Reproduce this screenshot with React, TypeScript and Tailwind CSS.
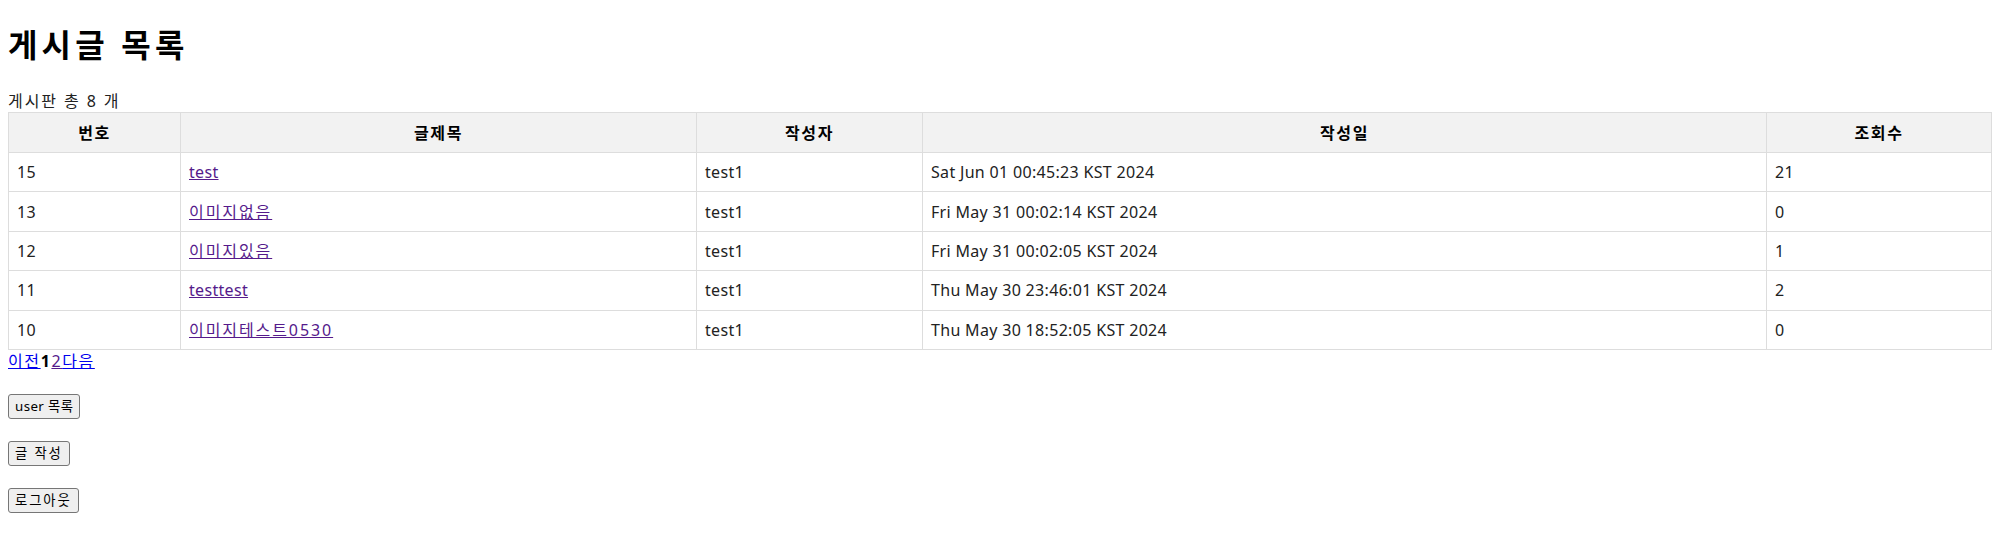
import React from "react";

interface Post {
  id: number;
  title: string;
  writer: string;
  date: string;
  views: number;
}

const posts: Post[] = [
  { id: 15, title: "test", writer: "test1", date: "Sat Jun 01 00:45:23 KST 2024", views: 21 },
  { id: 13, title: "이미지없음", writer: "test1", date: "Fri May 31 00:02:14 KST 2024", views: 0 },
  { id: 12, title: "이미지있음", writer: "test1", date: "Fri May 31 00:02:05 KST 2024", views: 1 },
  { id: 11, title: "testtest", writer: "test1", date: "Thu May 30 23:46:01 KST 2024", views: 2 },
  { id: 10, title: "이미지테스트0530", writer: "test1", date: "Thu May 30 18:52:05 KST 2024", views: 0 },
];

const buttons = [
  { label: "user 목록", tracking: "tracking-[0.03em]" },
  { label: "글 작성", tracking: "tracking-[0.14em]" },
  { label: "로그아웃", tracking: "tracking-[0.14em]" },
];

const font = { fontFamily: '"Noto Sans", "Noto Sans CJK KR", sans-serif' };

const hasHangul = (s: string) => /[\uac00-\ud7a3]/.test(s);

export default function App() {
  return (
    <div className="min-h-[541px] bg-white px-2 pt-[21px] text-black" style={font}>
      <h1 className="h-[48px] text-[32px] font-bold leading-[48px] tracking-[0.13em]">게시글 목록</h1>
      <div className="mt-[21px] h-[22px] text-[16px] leading-[22px] tracking-[0.12em] text-[#222]">게시판 총 8 개</div>

      <table className="w-full border-collapse text-[16px]">
        <thead>
          <tr className="bg-[#f2f2f2] tracking-[0.1em]">
            <th className="h-[40px] w-[172px] border border-[#ddd] px-2 text-center font-bold">번호</th>
            <th className="w-[516px] border border-[#ddd] px-2 text-center font-bold">글제목</th>
            <th className="w-[226px] border border-[#ddd] px-2 text-center font-bold">작성자</th>
            <th className="w-[844px] border border-[#ddd] px-2 text-center font-bold">작성일</th>
            <th className="border border-[#ddd] px-2 text-center font-bold">조회수</th>
          </tr>
        </thead>
        <tbody>
          {posts.map((post) => (
            <tr key={post.id} className="tracking-[0.02em]">
              <td className="h-[39.4px] border border-[#ddd] px-2 text-[#222]">{post.id}</td>
              <td className="border border-[#ddd] px-2">
                <a
                  href="#"
                  className={`text-[#551a8b] underline ${
                    hasHangul(post.title) ? "tracking-[0.12em]" : "tracking-[0.02em]"
                  }`}
                >
                  {post.title}
                </a>
              </td>
              <td className="border border-[#ddd] px-2 text-[#222]">{post.writer}</td>
              <td className="border border-[#ddd] px-2 text-[#222]">{post.date}</td>
              <td className="border border-[#ddd] px-2 text-[#222]">{post.views}</td>
            </tr>
          ))}
        </tbody>
      </table>

      <div className="h-[22px] text-[16px] leading-[22px] tracking-[0.1em]">
        <a href="#" className="text-[#0000ee] underline">이전</a>
        <b>1</b>
        <a href="#" className="text-[#551a8b] underline">2</a>
        <a href="#" className="text-[#0000ee] underline">다음</a>
      </div>

      <div className="mt-[22px] flex flex-col items-start gap-[22px]">
        {buttons.map((b) => (
          <button
            key={b.label}
            className={`h-[25px] rounded-[3px] border border-[#767676] bg-[#efefef] px-[6px] text-[13.33px] leading-none text-black ${b.tracking}`}
          >
            {b.label}
          </button>
        ))}
      </div>
    </div>
  );
}
